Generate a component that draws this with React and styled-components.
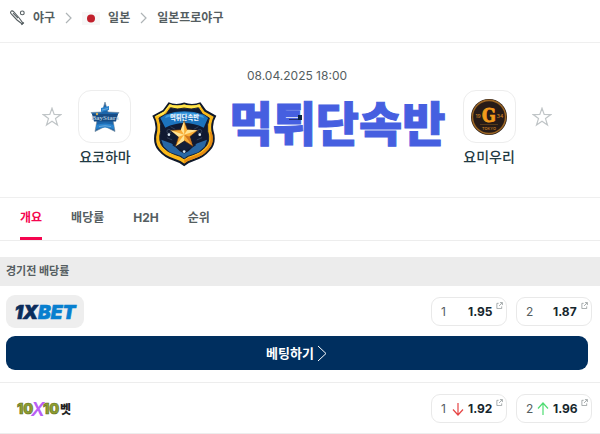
import styled, { createGlobalStyle } from "styled-components";

const GlobalStyle = createGlobalStyle`
  * {
    box-sizing: border-box;
  }
  body {
    margin: 0;
    background: #fff;
    color: #555e61;
    font-family: Inter, "Noto Sans CJK KR", sans-serif;
    font-size: 12px;
    line-height: 16px;
  }
  a {
    color: inherit;
    text-decoration: none;
  }
  button {
    border: 0;
    padding: 0;
    background: none;
    color: inherit;
    font: inherit;
    cursor: pointer;
  }
  svg {
    display: block;
    flex: none;
  }
`;

const Breadcrumb = styled.nav`
  display: flex;
  align-items: center;
  gap: 10px;
  height: 43px;
  padding: 0 10px 6px;
  border-bottom: 1px solid #efefef;
  font-weight: 700;
  a {
    display: flex;
    align-items: center;
    gap: 8px;
  }
`;

const Match = styled.section`
  padding: 25px 6px 30px 0;
  border-bottom: 1px solid #efefef;
`;

const MatchDate = styled.time`
  display: block;
  margin-bottom: 6px;
  text-align: center;
`;

const Teams = styled.div`
  display: flex;
  justify-content: center;
  gap: 16px;
`;

const StarButton = styled.button`
  display: flex;
  align-items: center;
  height: 53px;
`;

const Team = styled.a`
  display: flex;
  flex-direction: column;
  align-items: center;
  gap: 4px;
  width: 53px;
  color: #1f3a43;
  font-size: 14px;
  font-weight: 500;
  line-height: 20px;
  white-space: nowrap;
`;

const Crest = styled.span`
  display: flex;
  align-items: center;
  justify-content: center;
  width: 53px;
  height: 53px;
  border: 1px solid #ededed;
  border-radius: 13px;
`;

const Brand = styled.div`
  display: flex;
  align-items: flex-end;
  gap: 12px;
  margin: 0 1px 0 5px;
`;

const BrandName = styled.h1`
  position: relative;
  margin: 0;
  padding-bottom: 22px;
  color: #465fe0;
  font-family: "Noto Sans CJK KR", sans-serif;
  font-size: 47px;
  font-weight: 900;
  line-height: 48px;
  white-space: nowrap;
  -webkit-text-stroke: 1px #465fe0;
  &::after {
    content: "";
    position: absolute;
    left: 60px;
    top: 18px;
    width: 13px;
    height: 5px;
    background: linear-gradient(#0c2340, #0c2340) right / 4px 5px no-repeat,
      linear-gradient(#23306f, #23306f) bottom / 13px 1px no-repeat;
  }
`;

const Tabs = styled.nav`
  display: flex;
  gap: 29px;
  padding: 0 20px;
  border-bottom: 1px solid #ededed;
`;

const Tab = styled.a`
  padding: 12px 0 11px;
  border-bottom: 3px solid transparent;
  font-weight: 700;
  &[aria-current] {
    color: #f5054f;
    background: linear-gradient(#f5054f, #f5054f) bottom / 100% 3px no-repeat;
    background-origin: border-box;
    background-clip: border-box;
  }
`;

const SectionTitle = styled.h2`
  margin: 16px 0 0;
  padding: 6px 6px 7px;
  background: #ececec;
  font-size: 11px;
  font-weight: 700;
  line-height: 16px;
`;

const Bookmaker = styled.article`
  padding: 9px 8px ${(props) => (props.$compact ? "8px" : "12px")} 6px;
  border-bottom: 1px solid #ededed;
`;

const BookmakerRow = styled.div`
  display: flex;
  align-items: center;
  gap: 9px;
`;

const BookmakerLink = styled.a`
  display: flex;
  align-items: center;
  justify-content: center;
  width: 78px;
  height: 33px;
  margin-right: auto;
  border-radius: 9px;
  background: ${(props) => (props.$shaded ? "#eeeeee" : "transparent")};
`;

const Odd = styled.button`
  display: grid;
  grid-template-columns: 11px 16px 28px 7px;
  align-items: center;
  width: 76px;
  height: 29px;
  padding: 0 3px 0 9px;
  border: 1px solid #e9e9e9;
  border-radius: 9px;
  text-align: left;
  strong {
    color: #16262d;
  }
  > svg {
    align-self: start;
    margin-top: 4px;
  }
`;

const BetButton = styled.button`
  display: flex;
  align-items: center;
  justify-content: center;
  gap: 3px;
  width: calc(100% - 4px);
  height: 34px;
  margin-top: 8px;
  border-radius: 9px;
  background: #002f5f;
  color: #fff;
  font-size: 13px;
  font-weight: 700;
`;

const BatIcon = () => (
  <svg width="15" height="16" viewBox="0 0 15 16" fill="none" stroke="#555e61" strokeWidth="1.1">
    <path d="M.9 1.500C1.500.6 2.600.7 3.600 1.700L9.200 8l3.800 5.200-.8.800L7 10 1.500 4.200C.5 3.200.300 2.300.9 1.500z" />
    <path d="M11.400 14.800l2.500-2.300M3 3.200l5 5" />
    <circle cx="12.300" cy="2.900" r="1.900" />
  </svg>
);

const Separator = () => (
  <svg width="7" height="12" viewBox="0 0 7 12" fill="none" stroke="#aeb4b6" strokeWidth="1.200">
    <path d="M1 1l5 5-5 5" />
  </svg>
);

const JapanFlag = () => (
  <svg width="18" height="13" viewBox="0 0 18 13">
    <path fill="#f7f7f7" d="M0 0h18v13H0z" />
    <circle cx="9" cy="6.500" r="4" fill="#c1202c" />
  </svg>
);

const Star = () => (
  <svg width="20" height="20" viewBox="0 0 20 20" fill="none" stroke="#c0c5c7" strokeWidth="1.200">
    <path d="M10 1.200l2.200 6.300 6.600.1-5.300 4 2 6.500-5.500-3.900-5.500 3.900 2-6.500-5.300-4 6.600-.1z" />
  </svg>
);

const BayStarsLogo = () => (
  <svg width="32" height="32" viewBox="0 0 32 32">
    <path
      fill="#1d66ab"
      stroke="#6c8193"
      strokeWidth=".6"
      d="M16 1l3 10 11 .5-6 8 2 11-10-5-10 5 2-11-6-8 11-.5z"
    />
    <path fill="#2a83cd" d="M12 7l8-2v4l-8 2zM7 24q9-3 18 0v4q-9-3-18 0z" />
    <path fill="#174c85" d="M3 13h26l-2 7.500H5z" />
    <text
      x="16"
      y="19"
      fill="#a9c3d8"
      fontFamily="Liberation Serif, serif"
      fontSize="7"
      fontWeight="700"
      textAnchor="middle"
    >
      BayStars
    </text>
    <path stroke="#8bb9df" strokeWidth=".7" d="M13 9l6-1.500M10 25.500q6-1.500 12 0" fill="none" />
    <circle cx="8" cy="13" r="1.200" fill="#d7b15b" />
  </svg>
);

const GiantsLogo = () => (
  <svg width="38" height="38" viewBox="0 0 38 38">
    <circle cx="19" cy="19" r="18" fill="#271b17" />
    <circle cx="19" cy="19" r="16.600" fill="none" stroke="#9a6524" strokeWidth="1.600" />
    <g fill="#c98126" fontFamily="Inter, sans-serif" textAnchor="middle">
      <text
        x="19"
        y="24"
        fill="#f39a1c"
        stroke="#f39a1c"
        strokeWidth=".8"
        fontFamily="DejaVu Serif Condensed, DejaVu Serif, serif"
        fontSize="18"
        fontWeight="700"
      >
        G
      </text>
      <text x="8" y="20" fontSize="5">
        19
      </text>
      <text x="30" y="20" fontSize="5">
        34
      </text>
      <text x="19" y="32" fontSize="4">
        TOKYO
      </text>
    </g>
    <path stroke="#76501f" strokeWidth=".6" d="M10 26.500h18" />
  </svg>
);

const Shield = () => (
  <svg width="65" height="66" viewBox="22 36 196 196">
    <path
      fill="#10192b"
      d="M72 38q22 10 47 1 25 9 49-1l17 24 31 17q-13 21-9 44 12 38-10 61-19 22-43 29-20 6-35 18-15-12-35-18-24-7-43-29-20-22-9-61 3-23-9-44l32-17z"
    />
    <path
      fill="#fbb91a"
      d="M75 44q22 8 44 1 23 7 46-1l15 22 28 16q-10 20-7 42 11 34-9 57-17 20-40 26-20 6-33 16-13-10-33-16-23-6-40-26-18-20-8-57 2-22-8-42l29-16z"
    />
    <path fill="#ffe64b" d="M75 44q22 8 44 1 23 7 46-1l5 8q-27 8-51 1-24 7-45-1L56 76 33 82l-3-1 28-15z" />
    <path fill="#e58a12" d="M202 127q11 34-10 54-17 20-40 26-20 6-33 16v-9q15-10 33-15 22-7 37-25 15-18 7-47z" />
    <path
      fill="#101a31"
      stroke="#162237"
      strokeWidth="3"
      d="M78 55q20 7 41 1 22 6 43-1l12 18 21 13q-8 20-5 40 9 29-7 47-14 16-34 22-19 5-30 14-11-9-30-14-20-6-34-22-15-17-7-47 2-20-5-40l22-13z"
    />
    <path fill="#1c74bd" d="M62 76q57-21 116 0l13 10-13 29q-58-28-116 0L47 86z" />
    <path fill="#3c9ade" d="M65 78q54-19 110 0l4 8q-60-20-118 0z" />
    <path fill="#2867a4" d="M50 151l31 12 25 23 13 7 13-7 25-23 31-12-7 21-19 17-33 11-10 8-10-8-33-11-19-17z" />
    <path fill="#152039" d="M83 169l36-14 36 14-25 11-11 12-11-12z" />
    <text
      x="120"
      y="91"
      fill="#eef6ff"
      fontFamily="Noto Sans CJK KR, sans-serif"
      fontSize="19"
      fontWeight="900"
      textAnchor="middle"
    >
      먹튀단속반
    </text>
    <g fill="none" stroke="#405168" strokeWidth="2">
      <circle cx="73" cy="126" r="6" />
      <circle cx="166" cy="126" r="6" />
      <path d="M78 112l14 8M162 112l-14 8M67 145l16 7M173 145l-16 7" />
    </g>
    <path
      fill="#f8ac36"
      stroke="#522a10"
      strokeWidth="2"
      d="M119 94l10 27 31 2-24 19 9 29-26-17-26 17 9-29-24-19 31-2z"
    />
    <path
      fill="#ffe494"
      d="M119 94v42l-10-15zM78 123l41 13-17 6zM93 171l26-35v18zM160 123l-41 13 10-15z"
    />
    <path fill="#cf761f" d="M145 171l-26-35 17 6z" />
    <g fill="#dcebf5">
      <circle cx="73" cy="136" r="4" />
      <circle cx="166" cy="136" r="4" />
      <circle cx="119" cy="187" r="4" />
    </g>
  </svg>
);

const OneXBetLogo = () => (
  <svg width="70" height="24" viewBox="0 0 70 24">
    <text
      x="35"
      y="19"
      fill="#0b2d5c"
      fontFamily="Inter, sans-serif"
      fontSize="19"
      fontStyle="italic"
      fontWeight="900"
      textAnchor="middle"
      stroke="#0b2d5c"
      strokeWidth=".6"
    >
      1X
      <tspan fill="#087fcf" stroke="#087fcf">
        BET
      </tspan>
    </text>
  </svg>
);

const TenXTenLogo = () => (
  <svg width="60" height="26" viewBox="0 0 60 26" fontFamily="Inter, sans-serif" fontWeight="900">
    <g fill="#8d9e2f" stroke="#5d6a1e" strokeWidth=".6" fontSize="14">
      <text x="2" y="18">
        10
      </text>
      <text x="28" y="18">
        10
      </text>
    </g>
    <text x="16" y="20" fill="#b95ff5" fontSize="19" fontStyle="italic" fontWeight="600">
      X
    </text>
    <text x="45" y="18" fill="#222" fontFamily="Noto Sans CJK KR, sans-serif" fontSize="12">
      벳
    </text>
  </svg>
);

const ExternalIcon = () => (
  <svg width="7" height="7" viewBox="0 0 8 8" fill="none" stroke="#8f9698" strokeWidth=".9">
    <path d="M3 1.500H1v6h5.500V5M4.500.7h2.800v2.800M7.200.8L3.500 4.500" />
  </svg>
);

const Trend = ({ up }) => (
  <svg
    width="12"
    height="14"
    viewBox="0 0 12 14"
    fill="none"
    stroke={up ? "#4fdc72" : "#e64545"}
    strokeWidth="1.200"
    role="img"
    aria-label={up ? "상승" : "하락"}
  >
    <path d={up ? "M6 13V1M1 6.500L6 1l5 5.500" : "M6 1v12M1 7.500L6 13l5-5.500"} />
  </svg>
);

const bookmakers = [
  {
    name: "1XBET",
    Logo: OneXBetLogo,
    featured: true,
    odds: [
      { pick: "1", value: "1.95" },
      { pick: "2", value: "1.87" },
    ],
  },
  {
    name: "10X10벳",
    Logo: TenXTenLogo,
    odds: [
      { pick: "1", value: "1.92", trend: "down" },
      { pick: "2", value: "1.96", trend: "up" },
    ],
  },
];

const App = () => {
  return (
    <>
      <GlobalStyle />
      <Breadcrumb>
        <a href="#baseball">
          <BatIcon />
          야구
        </a>
        <Separator />
        <a href="#japan">
          <JapanFlag />
          일본
        </a>
        <Separator />
        <a href="#npb">일본프로야구</a>
      </Breadcrumb>
      <main>
        <Match>
          <MatchDate dateTime="2025-04-08T18:00">08.04.2025 18:00</MatchDate>
          <Teams>
            <StarButton aria-label="요코하마 즐겨찾기">
              <Star />
            </StarButton>
            <Team href="#yokohama">
              <Crest>
                <BayStarsLogo />
              </Crest>
              요코하마
            </Team>
            <Brand>
              <Shield />
              <BrandName>먹튀단속반</BrandName>
            </Brand>
            <Team href="#yomiuri">
              <Crest>
                <GiantsLogo />
              </Crest>
              요미우리
            </Team>
            <StarButton aria-label="요미우리 즐겨찾기">
              <Star />
            </StarButton>
          </Teams>
        </Match>
        <Tabs>
          <Tab href="#overview" aria-current="page">
            개요
          </Tab>
          <Tab href="#odds">배당률</Tab>
          <Tab href="#h2h">H2H</Tab>
          <Tab href="#standings">순위</Tab>
        </Tabs>
        <SectionTitle>경기전 배당률</SectionTitle>
        {bookmakers.map(({ name, Logo, featured, odds }) => (
          <Bookmaker key={name} $compact={!featured}>
            <BookmakerRow>
              <BookmakerLink href="#bookmaker" aria-label={name} $shaded={featured}>
                <Logo />
              </BookmakerLink>
              {odds.map(({ pick, value, trend }) => (
                <Odd key={pick}>
                  <span>{pick}</span>
                  <span>{trend && <Trend up={trend === "up"} />}</span>
                  <strong>{value}</strong>
                  <ExternalIcon />
                </Odd>
              ))}
            </BookmakerRow>
            {featured && (
              <BetButton>
                베팅하기
                <svg width="11" height="17" viewBox="0 0 11 17" fill="none" stroke="#fff">
                  <path d="M1 1l8 7.500L1 16" />
                </svg>
              </BetButton>
            )}
          </Bookmaker>
        ))}
      </main>
    </>
  );
};

export default App;
